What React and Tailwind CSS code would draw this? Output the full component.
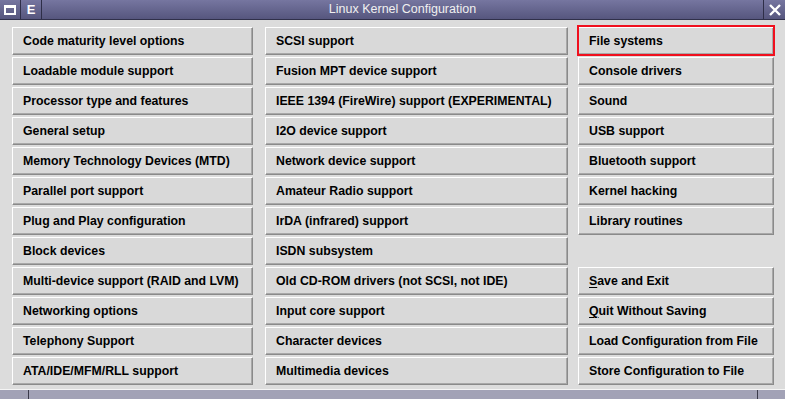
import React from "react"

const col1 = [
  "Code maturity level options",
  "Loadable module support",
  "Processor type and features",
  "General setup",
  "Memory Technology Devices (MTD)",
  "Parallel port support",
  "Plug and Play configuration",
  "Block devices",
  "Multi-device support (RAID and LVM)",
  "Networking options",
  "Telephony Support",
  "ATA/IDE/MFM/RLL support",
]

const col2 = [
  "SCSI support",
  "Fusion MPT device support",
  "IEEE 1394 (FireWire) support (EXPERIMENTAL)",
  "I2O device support",
  "Network device support",
  "Amateur Radio support",
  "IrDA (infrared) support",
  "ISDN subsystem",
  "Old CD-ROM drivers (not SCSI, not IDE)",
  "Input core support",
  "Character devices",
  "Multimedia devices",
]

const col3 = [
  { label: "File systems", focus: true },
  { label: "Console drivers" },
  { label: "Sound" },
  { label: "USB support" },
  { label: "Bluetooth support" },
  { label: "Kernel hacking" },
  { label: "Library routines" },
  null,
  { label: "ave and Exit", ul: "S" },
  { label: "uit Without Saving", ul: "Q" },
  { label: "Load Configuration from File" },
  { label: "Store Configuration to File" },
]

function Btn({ children, focus }) {
  return (
    <div className="h-[28px] relative">
      <div className="h-full flex items-center pl-[10px] bg-[#d9d9d9] border border-t-white border-l-white border-b-[#8a8a8a] border-r-[#8a8a8a] shadow-[inset_-1px_-1px_0_#a8a8a8] text-[12.3px] font-bold text-black whitespace-nowrap">
        {children}
      </div>
      {focus && <div className="absolute -inset-x-[1px] -top-[2px] -bottom-[1px] border-2 border-[#f0101e]"></div>}
    </div>
  )
}

export default function App() {
  return (
    <div className="w-[785px] h-[399px] bg-[#dcdcdc] flex flex-col overflow-hidden" style={{ fontFamily: "'Liberation Sans', Arial, sans-serif" }}>
      {/* title bar */}
      <div className="h-[20px] flex bg-[#2e2e48] gap-[1px] border-b border-[#30304a]">
        <div className="w-[20px] bg-gradient-to-b from-[#7676a0] to-[#56567e] flex items-center justify-center">
          <div className="w-[12px] h-[10px] border-2 border-white border-t-[3px]"></div>
        </div>
        <div className="w-[20px] bg-gradient-to-b from-[#7676a0] to-[#56567e] flex items-center justify-center text-white font-bold text-[13px]">E</div>
        <div className="flex-1 bg-gradient-to-b from-[#7676a0] to-[#56567e] flex items-center justify-center text-[#f0f0f0] text-[12.5px]">
          Linux Kernel Configuration
        </div>
        <div className="w-[21px] bg-gradient-to-b from-[#7676a0] to-[#56567e] flex items-center justify-center">
          <svg width="12" height="12" viewBox="0 0 12 12">
            <path d="M1 1L11 11M11 1L1 11" stroke="white" strokeWidth="2.4" />
          </svg>
        </div>
      </div>

      {/* buttons */}
      <div className="flex-1 flex gap-[12px] pl-[12px] pt-[7px]">
        <div className="w-[241px] flex flex-col gap-[2px]">
          {col1.map((t) => (
            <Btn key={t}>{t}</Btn>
          ))}
        </div>
        <div className="w-[303px] flex flex-col gap-[2px]">
          {col2.map((t) => (
            <Btn key={t}>{t}</Btn>
          ))}
        </div>
        <div className="w-[196px] ml-[-2px] flex flex-col gap-[2px]">
          {col3.map((b, i) =>
            b ? (
              <Btn key={i} focus={b.focus}>
                {b.ul && <span className="underline underline-offset-2">{b.ul}</span>}
                {b.label}
              </Btn>
            ) : (
              <div key={i} className="h-[28px]"></div>
            )
          )}
        </div>
      </div>

      {/* status bar */}
      <div className="h-[10px] flex bg-[#a2a2b6] border-t border-[#f4f4f4]">
        <div className="w-[29px] border-r border-[#3a3a4a]"></div>
        <div className="flex-1 border-r border-[#3a3a4a]"></div>
        <div className="w-[27px]"></div>
      </div>
    </div>
  )
}
